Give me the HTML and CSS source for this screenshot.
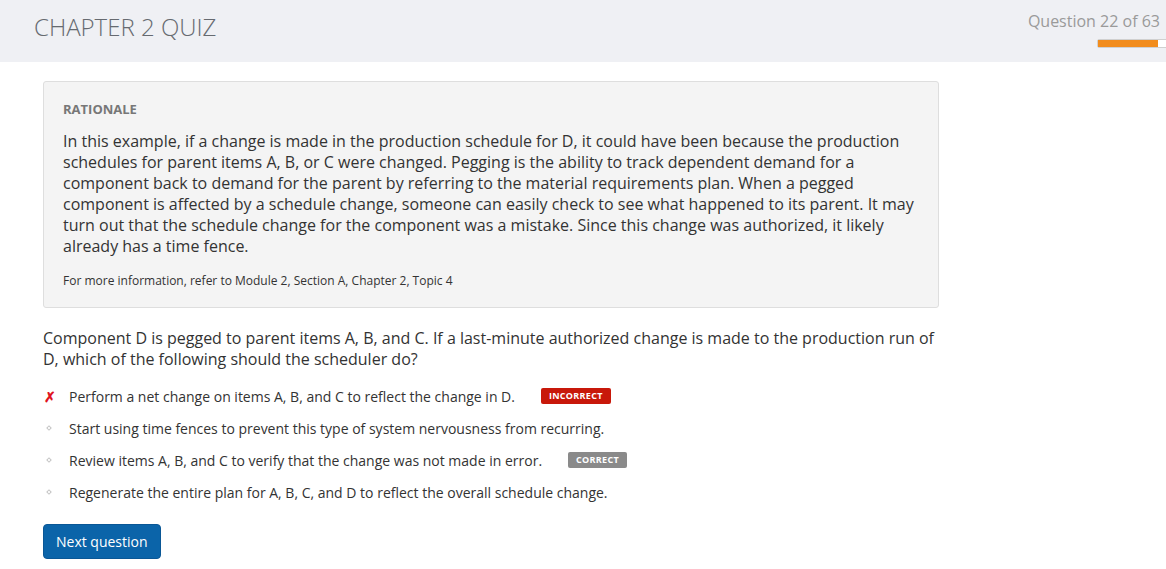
FILE: index.html
```html
<!DOCTYPE html>
<html>
<head>
<meta charset="utf-8">
<link rel="stylesheet" href="styles.css">
</head>
<body>
<header class="topbar">
  <h1 class="title">CHAPTER 2 QUIZ</h1>
  <div class="progress">
    <div class="progress-label">Question 22 of 63</div>
    <div class="progress-track"><div class="progress-fill"></div></div>
  </div>
</header>
<main class="content">
  <section class="rationale">
    <h2 class="rationale-head">RATIONALE</h2>
    <p class="rationale-text">In this example, if a change is made in the production schedule for D, it could have been because the production schedules for parent items A, B, or C were changed. Pegging is the ability to track dependent demand for a component back to demand for the parent by referring to the material requirements plan. When a pegged component is affected by a schedule change, someone can easily check to see what happened to its parent. It may turn out that the schedule change for the component was a mistake. Since this change was authorized, it likely already has a time fence.</p>
    <p class="rationale-ref">For more information, refer to Module 2, Section A, Chapter 2, Topic 4</p>
  </section>
  <p class="question">Component D is pegged to parent items A, B, and C. If a last-minute authorized change is made to the production run of D, which of the following should the scheduler do?</p>
  <ul class="options">
    <li class="option"><span class="mark"><span class="mark-x">✗</span></span><span class="opt-text">Perform a net change on items A, B, and C to reflect the change in D.</span><span class="badge badge-incorrect">INCORRECT</span></li>
    <li class="option"><span class="mark"><span class="mark-dot"></span></span><span class="opt-text">Start using time fences to prevent this type of system nervousness from recurring.</span></li>
    <li class="option"><span class="mark"><span class="mark-dot"></span></span><span class="opt-text">Review items A, B, and C to verify that the change was not made in error.</span><span class="badge badge-correct">CORRECT</span></li>
    <li class="option"><span class="mark"><span class="mark-dot"></span></span><span class="opt-text">Regenerate the entire plan for A, B, C, and D to reflect the overall schedule change.</span></li>
  </ul>
  <button class="next-btn">Next question</button>
</main>
</body>
</html>
```
FILE: styles.css
```css
* { box-sizing: border-box; }
html, body { margin: 0; padding: 0; }
body {
  font-family: "Open Sans", "Liberation Sans", sans-serif;
  background: #fff;
  color: #333;
  overflow: hidden;
}
.topbar {
  height: 62px;
  background: #eff0f4;
  display: flex;
  justify-content: space-between;
  align-items: flex-start;
}
.title {
  margin: 10px 0 0 34px;
  font-weight: 300;
  font-size: 24px;
  line-height: 34px;
  color: #666a70;
}
.progress {
  display: flex;
  flex-direction: column;
  align-items: flex-end;
  margin-top: 9px;
  margin-right: 6px;
}
.progress-label {
  font-size: 16px;
  line-height: 24px;
  color: #9a9a9a;
}
.progress-track {
  margin-top: 6px;
  width: 72px;
  height: 9px;
  margin-right: -9px;
  background: #fff;
  border: 1px solid #d0d0d0;
  border-radius: 2px;
}
.progress-fill {
  width: 60px;
  height: 100%;
  background: #f28c1c;
}
.content {
  padding: 19px 0 0 43px;
}
.rationale {
  width: 896px;
  background: #f4f4f4;
  border: 1px solid #dedede;
  border-radius: 3px;
  padding: 18px 20px 17px 19px;
}
.rationale-head {
  margin: 0 0 13px;
  font-size: 13px;
  font-weight: 700;
  color: #777;
  line-height: 18px;
}
.rationale-text {
  margin: 0;
  font-size: 16px;
  line-height: 21px;
  color: #333;
}
.rationale-ref {
  margin: 15px 0 0;
  font-size: 12px;
  line-height: 18px;
  color: #333;
}
.question {
  margin: 20px 0 10px;
  width: 900px;
  font-size: 16px;
  line-height: 21px;
  color: #333;
}
.options {
  list-style: none;
  margin: 0;
  padding: 0;
}
.option {
  display: flex;
  align-items: center;
  height: 32px;
  font-size: 14px;
  color: #333;
}
.mark {
  width: 26px;
  display: flex;
  align-items: center;
}
.mark-x {
  color: #e0141e;
  font-size: 14px;
  font-weight: 700;
  margin-left: 1px;
}
.mark-dot {
  display: inline-block;
  width: 4px;
  height: 4px;
  margin-left: 4px;
  border: 1px solid #c4c4c4;
  transform: rotate(45deg);
}
.opt-text { white-space: nowrap; }
.badge {
  display: inline-block;
  margin-left: 26px;
  padding: 0 8px;
  height: 16px;
  line-height: 16px;
  font-size: 9px;
  font-weight: 700;
  letter-spacing: 0.3px;
  color: #fff;
  border-radius: 2px;
}
.badge-incorrect { background: #c8180a; }
.badge-correct { background: #8a8a8a; }
.next-btn {
  margin-top: 16px;
  height: 35px;
  padding: 0 12px;
  background: #0b64a9;
  color: #fff;
  border: 1px solid #0a5796;
  border-radius: 4px;
  font-family: "Open Sans", "Liberation Sans", sans-serif;
  font-size: 14px;
  font-weight: 500;
}
```
